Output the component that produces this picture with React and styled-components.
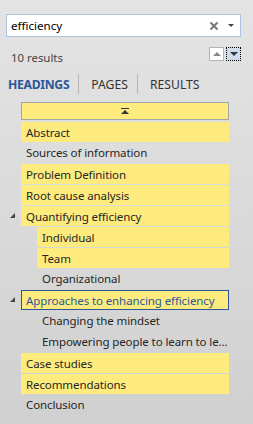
import React from 'react';
import styled, { createGlobalStyle } from 'styled-components';

const GlobalStyle = createGlobalStyle`
  html, body {
    margin: 0;
    padding: 0;
  }
  body {
    width: 253px;
    height: 424px;
    overflow: hidden;
    font-family: "Segoe UI", "Noto Sans", sans-serif;
    font-size: 11.4px;
    color: #262626;
  }
`;

const Pane = styled.div`
  width: 253px;
  height: 424px;
  box-sizing: border-box;
  padding: 14px 12px 0 6px;
  background: linear-gradient(to bottom, #e4e4e4, #d0d0d0);
  display: flex;
  flex-direction: column;
`;

const SearchBox = styled.div`
  height: 23px;
  box-sizing: border-box;
  border: 1px solid #a9c3e2;
  background: #fff;
  display: flex;
  align-items: center;
  padding: 0 4px 0 4px;
`;

const SearchText = styled.span`
  flex: 1;
  font-size: 11.6px;
  color: #000;
`;

const ClearIcon = styled.span`
  width: 10px;
  height: 10px;
  margin-right: 9px;
  display: flex;
`;

const DropArrow = styled.span`
  width: 0;
  height: 0;
  border-left: 3px solid transparent;
  border-right: 3px solid transparent;
  border-top: 3px solid #444;
  margin-right: 2px;
`;

const ResultsBar = styled.div`
  display: flex;
  align-items: center;
  justify-content: space-between;
  padding: 12px 0 0 5px;
  height: 16px;
  color: #444;
`;

const NavButtons = styled.div`
  display: flex;
  gap: 2px;
  margin-top: -6px;
`;

const NavButton = styled.div`
  width: 15px;
  height: 14px;
  box-sizing: border-box;
  border: 1px ${p => (p.$focused ? 'dotted #000' : 'solid #b4b4b4')};
  background: ${p => (p.$focused ? '#cfdcee' : '#fff')};
  display: flex;
  align-items: center;
  justify-content: center;
`;

const Arrow = styled.span`
  width: 0;
  height: 0;
  border-left: 4px solid transparent;
  border-right: 4px solid transparent;
  ${p => (p.$down ? 'border-top: 4px solid #333;' : 'border-bottom: 4px solid #888;')}
`;

const Tabs = styled.div`
  display: flex;
  align-items: center;
  margin-top: 9px;
  height: 20px;
  padding-left: 2px;
`;

const Tab = styled.span`
  font-size: 12.2px;
  color: ${p => (p.$active ? '#2b579a' : '#333')};
  font-weight: ${p => (p.$active ? 700 : 400)};
  letter-spacing: ${p => (p.$active ? '-0.3px' : '0')};
`;

const TabDivider = styled.span`
  width: 1px;
  height: 20px;
  background: #b5b5b5;
  margin: 0 12px 0 9px;
`;

const Tree = styled.div`
  margin-top: 8px;
  display: flex;
  flex-direction: column;
  padding-left: 15px;
  width: 208px;
`;

const CollapseBar = styled.div`
  height: 18px;
  box-sizing: border-box;
  border: 1px solid #a5a5a5;
  background: #feeb7e;
  display: flex;
  align-items: center;
  justify-content: center;
  margin-bottom: 1px;
`;

const Row = styled.div`
  position: relative;
  height: 21px;
  display: flex;
`;

const Item = styled.div`
  flex: 1;
  min-width: 0;
  margin-left: ${p => (p.$level === 2 ? 16 : 0)}px;
  height: 20px;
  margin-top: ${p => (p.$hit ? 1 : 0)}px;
  box-sizing: border-box;
  background: ${p => (p.$hit ? '#feeb7e' : 'transparent')};
  border: 1px solid ${p => (p.$current ? '#2b579a' : 'transparent')};
  padding-left: 4px;
  display: flex;
  align-items: center;
  white-space: nowrap;
  overflow: hidden;
  color: ${p => (p.$current ? '#2b579a' : '#262626')};
  font-size: 11.5px;
  letter-spacing: -0.1px;
`;

const Expander = styled.span`
  position: absolute;
  left: -11px;
  top: 8px;
  width: 0;
  height: 0;
  border-left: 5px solid transparent;
  border-bottom: 5px solid #444;
`;

const headings = [
  { text: 'Abstract', hit: true },
  { text: 'Sources of information' },
  { text: 'Problem Definition', hit: true },
  { text: 'Root cause analysis', hit: true },
  { text: 'Quantifying efficiency', hit: true, expanded: true },
  { text: 'Individual', hit: true, level: 2 },
  { text: 'Team', hit: true, level: 2 },
  { text: 'Organizational', level: 2 },
  { text: 'Approaches to enhancing efficiency', hit: true, expanded: true, current: true },
  { text: 'Changing the mindset', level: 2 },
  { text: 'Empowering people to learn to le...', level: 2 },
  { text: 'Case studies', hit: true },
  { text: 'Recommendations', hit: true },
  { text: 'Conclusion' },
];

const App = () => (
  <>
    <GlobalStyle />
    <Pane>
      <SearchBox>
        <SearchText>efficiency</SearchText>
        <ClearIcon>
          <svg width="10" height="10" viewBox="0 0 10 10">
            <path d="M1.5 1.5 L8.5 8.5 M8.5 1.5 L1.5 8.5" stroke="#777" strokeWidth="2" />
          </svg>
        </ClearIcon>
        <DropArrow />
      </SearchBox>
      <ResultsBar>
        <span>10 results</span>
        <NavButtons>
          <NavButton><Arrow /></NavButton>
          <NavButton $focused><Arrow $down /></NavButton>
        </NavButtons>
      </ResultsBar>
      <Tabs>
        <Tab $active>HEADINGS</Tab>
        <TabDivider />
        <Tab>PAGES</Tab>
        <TabDivider />
        <Tab>RESULTS</Tab>
      </Tabs>
      <Tree>
        <CollapseBar>
          <svg width="8" height="6" viewBox="0 0 8 6">
            <rect x="0" y="0" width="8" height="1" fill="#333" />
            <path d="M0 6 L4 2 L8 6 Z" fill="#333" />
          </svg>
        </CollapseBar>
        {headings.map(h => (
          <Row key={h.text}>
            {h.expanded && <Expander />}
            <Item $level={h.level || 1} $hit={h.hit} $current={h.current}>
              {h.text}
            </Item>
          </Row>
        ))}
      </Tree>
    </Pane>
  </>
);

export default App;
